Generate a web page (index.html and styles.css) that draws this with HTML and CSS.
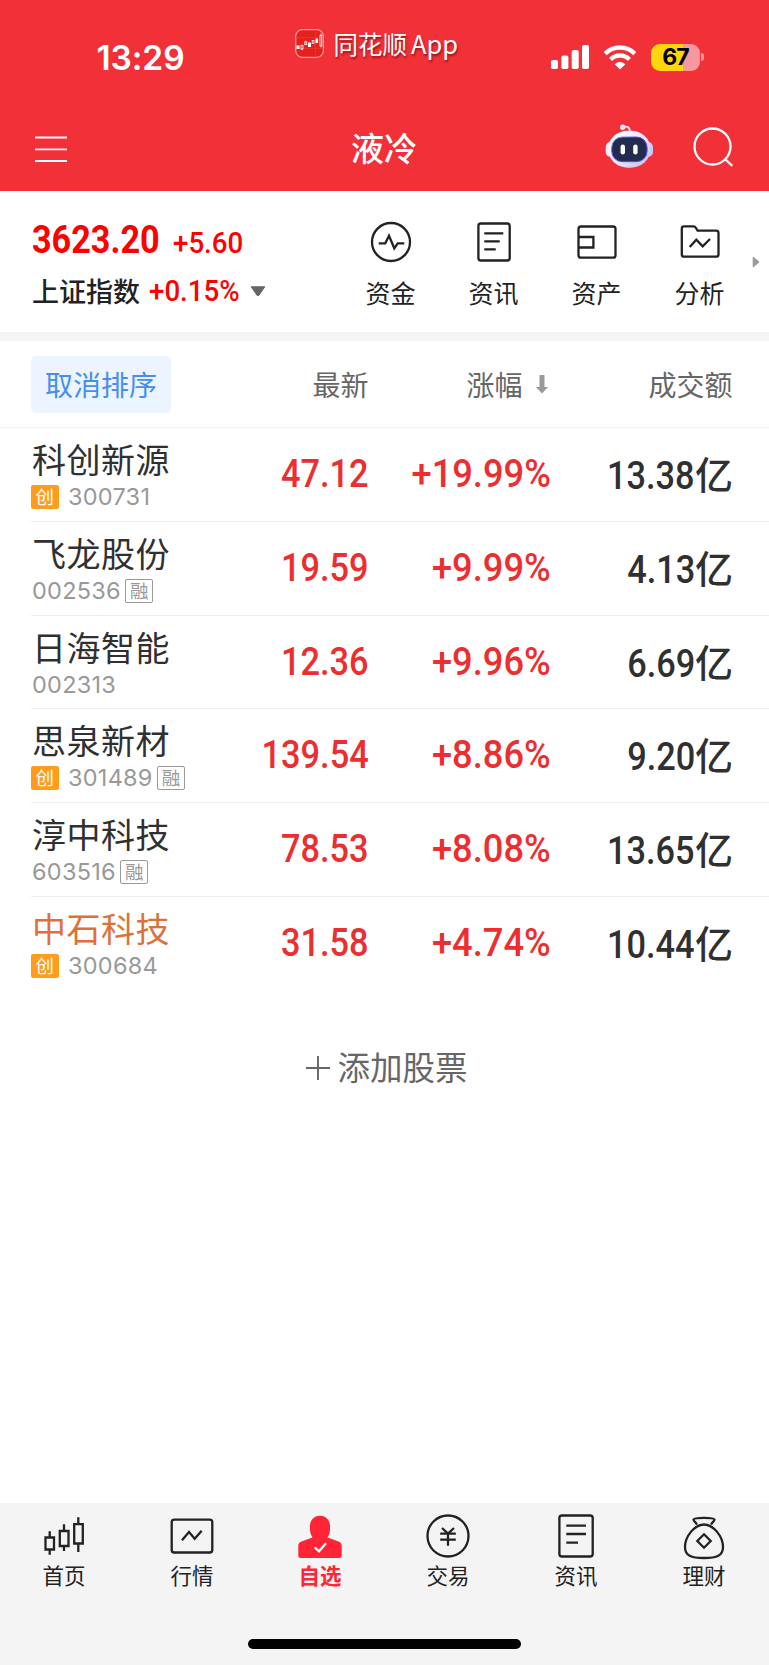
FILE: index.html
```html
<!DOCTYPE html>
<html lang="zh-CN">
<head>
<meta charset="utf-8">
<title>液冷</title>
<link rel="stylesheet" href="styles.css">
</head>
<body>
<div class="screen">
  <header class="top">
    <div class="status">
      <div class="clock">13:29</div>
      <div class="brand">
        <svg width="29" height="29" viewBox="0 0 29 29"><rect x=".7" y=".7" width="27.6" height="27.6" rx="6.5" fill="#e3211f" stroke="#f79a9a" stroke-width="1.3"/><path d="M1 8.500H28M1 19.500H28M20.500 1V28" stroke="#ec3a3a" stroke-width=".6"/><g fill="#fff"><rect x="1.500" y="16.500" width="3" height="3.500"/><rect x="13" y="13.500" width="3" height="4.500"/><rect x="20.500" y="9.500" width="2.500" height="4.500"/></g><g fill="none" stroke="#fff" stroke-width=".8"><rect x="6" y="16.700" width="2" height="3.300"/><path d="M7 15.500v1.200M7 20v1"/><rect x="9.800" y="13" width="2" height="2.700"/><path d="M10.800 11.700V13"/><rect x="17.200" y="11.500" width="1.800" height="2.800"/><rect x="25" y="6.500" width="1.800" height="10.500"/><path d="M25.900 4.500v2M25.900 17v1.300"/></g></svg>
        <span class="brand-name">同花顺<span class="latin">App</span></span>
      </div>
      <div class="signals">
        <svg class="bars" width="38" height="24" viewBox="0 0 38 24" fill="#fff"><rect x="0" y="15" width="7" height="9" rx="1.800"/><rect x="10.400" y="10.500" width="7" height="13.500" rx="1.800"/><rect x="20.700" y="5" width="7" height="19" rx="1.800"/><rect x="31" y="0" width="7" height="24" rx="1.800"/></svg>
        <svg class="wifi" width="34" height="25" viewBox="0 0 34 25" fill="none" stroke="#fff" stroke-width="4.300"><path d="M2.200 8.600A21 21 0 0 1 31.800 8.600"/><path d="M7.600 14.400A13.300 13.300 0 0 1 26.400 14.400"/><path d="M17 24.500L11.700 19.200A7.500 7.500 0 0 1 22.300 19.200Z" fill="#fff" stroke="none"/></svg>
        <div class="battery"><span>67</span></div><i class="battery-tip"></i>
      </div>
    </div>
    <div class="nav">
      <svg class="menu" width="32" height="28" viewBox="0 0 32 28" stroke="#fff" stroke-width="1.800"><path d="M0 2.500H32M0 14.300H32M0 26H32"/></svg>
      <h1 class="title">液冷</h1>
      <div class="nav-tools">
        <svg width="52" height="48" viewBox="0 0 52 48">
          <defs><linearGradient id="shell" x1="0" y1="0" x2="1" y2="1"><stop offset="0" stop-color="#fff"/><stop offset=".55" stop-color="#e9e6fa"/><stop offset="1" stop-color="#b9b9ee"/></linearGradient><linearGradient id="rim" x1="0" y1="0" x2="1" y2="1"><stop offset="0" stop-color="#6fd0e4"/><stop offset=".4" stop-color="#7c35d8"/><stop offset="1" stop-color="#4b59f0"/></linearGradient></defs>
          <path d="M20 5.500C24 3.500 27 5 27 10" fill="none" stroke="#eae4f6" stroke-width="1.800"/><circle cx="19.700" cy="5.300" r="2.700" fill="#e8e2f6"/>
          <rect x="2.700" y="20" width="10" height="15" rx="5" fill="#eeeafb"/><rect x="40" y="20" width="10" height="15" rx="5" fill="#c9c8f2"/>
          <rect x="5" y="8.700" width="42.600" height="37" rx="20" fill="url(#shell)"/>
          <rect x="8.700" y="15" width="35.400" height="24.700" rx="10.500" fill="#222c50" stroke="url(#rim)" stroke-width="1"/>
          <rect x="17.600" y="22.400" width="4.400" height="10" rx="2.200" fill="#fff"/><rect x="30.200" y="22.400" width="4.400" height="10" rx="2.200" fill="#fff"/>
        </svg>
        <svg width="42" height="42" viewBox="0 0 42 42" fill="none" stroke="#fff" stroke-width="2.300"><circle cx="19.500" cy="19.500" r="18"/><path d="M32 32L39.300 38.800"/></svg>
      </div>
    </div>
  </header>

  <section class="index-bar">
    <div class="index">
      <div class="index-row"><b class="num idx-value">3623.20</b><span class="num idx-small">+5.60</span></div>
      <div class="index-row second"><span class="idx-name">上证指数</span><span class="num idx-small">+0.15%</span><svg width="16" height="11" viewBox="0 0 16 11"><path d="M1.200 .8H14.800L8.800 9.500H7.200Z" fill="#666" stroke="#666" stroke-linejoin="round"/></svg></div>
    </div>
    <div class="quick">
      <div class="quick-item"><svg class="line-icon" width="44" height="44" viewBox="-22 -22 44 44"><circle r="19"/><path d="M-12.300 1.300H-5.700L-2 -6.300L3.300 6.300L6.700 1.300H13.300"/></svg><span>资金</span></div>
      <div class="quick-item"><svg class="line-icon" width="44" height="44" viewBox="-22 -22 44 44"><rect x="-15.600" y="-18.500" width="31.300" height="37" rx="2.500"/><path d="M-9.700 -8.700H9.300M-9.700 -.7H5.700M-9.700 7.300H1.700"/></svg><span>资讯</span></div>
      <div class="quick-item"><svg class="line-icon" width="44" height="44" viewBox="-22 -22 44 44"><rect x="-18.500" y="-15.500" width="37" height="31.200" rx="2.500"/><path d="M-18.500 -5H-3.600V5.500H-18.500"/></svg><span>资产</span></div>
      <div class="quick-item"><svg class="line-icon" width="44" height="44" viewBox="-22 -22 44 44"><path d="M-16 -15.700H-6.500Q-5 -15.700 -4 -14L-2.400 -11.300H16Q18.500 -11.300 18.500 -9V12.500Q18.500 14.700 16 14.700H-16Q-18.200 14.700 -18.200 12.500V-13.500Q-18.200 -15.700 -16 -15.700Z"/><path d="M-10.300 5L-3.700 -2.300L2.700 4.300L10 -3"/></svg><span>分析</span></div>
    </div>
    <svg class="more" width="8" height="12" viewBox="0 0 8 12"><path d="M1.200 1L7 6L1.200 11Z" fill="#999" stroke="#999" stroke-linejoin="round"/></svg>
  </section>

  <section class="stocks">
    <div class="thead">
      <div><span class="sort-off">取消排序</span><span class="th">最新</span></div>
      <div class="th sorted">涨幅<svg width="12" height="19" viewBox="0 0 12 19"><path d="M3.500 0H8.500V12H12L6 18.500L0 12H3.500Z" fill="#999"/></svg></div>
      <div class="th">成交额</div>
    </div>
    <div class="row"><div class="stock"><span class="name">科创新源</span><span class="code"><i class="tag gem">创</i>300731</span></div><span class="num price">47.12</span><span class="num change">+19.99%</span><span class="amount"><span class="num">13.38</span><span class="unit">亿</span></span></div>
    <div class="row"><div class="stock"><span class="name">飞龙股份</span><span class="code">002536<i class="tag margin">融</i></span></div><span class="num price">19.59</span><span class="num change">+9.99%</span><span class="amount"><span class="num">4.13</span><span class="unit">亿</span></span></div>
    <div class="row"><div class="stock"><span class="name">日海智能</span><span class="code">002313</span></div><span class="num price">12.36</span><span class="num change">+9.96%</span><span class="amount"><span class="num">6.69</span><span class="unit">亿</span></span></div>
    <div class="row"><div class="stock"><span class="name">思泉新材</span><span class="code"><i class="tag gem">创</i>301489<i class="tag margin">融</i></span></div><span class="num price">139.54</span><span class="num change">+8.86%</span><span class="amount"><span class="num">9.20</span><span class="unit">亿</span></span></div>
    <div class="row"><div class="stock"><span class="name">淳中科技</span><span class="code">603516<i class="tag margin">融</i></span></div><span class="num price">78.53</span><span class="num change">+8.08%</span><span class="amount"><span class="num">13.65</span><span class="unit">亿</span></span></div>
    <div class="row last"><div class="stock"><span class="name highlight">中石科技</span><span class="code"><i class="tag gem">创</i>300684</span></div><span class="num price">31.58</span><span class="num change">+4.74%</span><span class="amount"><span class="num">10.44</span><span class="unit">亿</span></span></div>
    <div class="add"><svg width="24" height="24" viewBox="0 0 24 24" stroke="#666" stroke-width="1.900"><path d="M0 12H24M12 0V24"/></svg><span>添加股票</span></div>
  </section>

  <nav class="tabbar">
    <div class="tabs">
      <div class="tab"><svg class="line-icon" width="48" height="48" viewBox="-24 -24 48 48"><path d="M-18.500 1.500H-10V13.500H-18.500ZM-14.300 -4.700V1.500M-14.300 13.500V18.700M-4.200 -5H4.500V10H-4.200ZM0 -11.700V-5M0 10V15M10.200 -11.800H18.800V7.500H10.200ZM14.300 -18.700V-11.800M14.300 7.500V16"/></svg><span>首页</span></div>
      <div class="tab"><svg class="line-icon" width="48" height="48" viewBox="-24 -24 48 48"><rect x="-20.300" y="-16.300" width="40.600" height="32.800" rx="2.500"/><path d="M-10 4.300L-3 -4L2.700 2.700L9.700 -5.300"/></svg><span>行情</span></div>
      <div class="tab active"><svg width="48" height="48" viewBox="-24 -24 48 48"><path d="M-10 -10C-10 -16 -6 -20.300 0 -20.300S10 -16 10 -10V-6C10 -2.500 8.500 -.5 7.500 1.500L18.500 5.500C21 6.500 21.700 8 21.700 10V19.500Q21.700 22 19.200 22H-19.200Q-21.700 22 -21.700 19.500V10C-21.700 8 -21 6.500 -18.500 5.500L-7.500 1.500C-8.500 -.5 -10 -2.500 -10 -6Z" fill="#ff2436"/><path d="M-5.300 11.300L-1 15.300L6 7.300" fill="none" stroke="#fff" stroke-width="2.200"/></svg><span>自选</span></div>
      <div class="tab"><svg class="line-icon" width="48" height="48" viewBox="-24 -24 48 48"><circle r="20.500"/><path d="M-6 -8L0 -2.300L6 -8M-7.800 -2.300H7.800M-7.800 3.700H7.800M0 -2.300V9.700"/></svg><span>交易</span></div>
      <div class="tab"><svg class="line-icon" width="48" height="48" viewBox="-24 -24 48 48"><rect x="-16.600" y="-20.500" width="33.300" height="41" rx="2.500"/><path d="M-9.700 -10.300H10M-9.700 -2H10M-9.700 6.700H2"/></svg><span>资讯</span></div>
      <div class="tab"><svg class="line-icon" width="48" height="48" viewBox="-24 -24 48 48"><path d="M-7 -11.300C-8 -14 -10.500 -14.500 -10.500 -16.500C-10 -18.800 10 -18.800 10.500 -16.500C10.500 -14.500 8 -14 7 -11.300"/><path d="M0 -11.500C9 -11.500 19 0 19 11C19 19.500 13 22 0 22S-19 19.500 -19 11C-19 0 -9 -11.500 0 -11.500Z"/><path d="M0 -1.700L6.700 5L0 11.700L-6.700 5Z"/></svg><span>理财</span></div>
    </div>
    <div class="home-bar"></div>
  </nav>
</div>
</body>
</html>
```
FILE: styles.css
```css
* { box-sizing: border-box; }
body { margin: 0; background: #fff; font-family: "Noto Sans CJK SC", sans-serif; color: #222; }
svg { display: block; flex: none; }
i { font-style: normal; }
.screen { width: 769px; height: 1665px; display: flex; flex-direction: column; overflow: hidden; }

.top { height: 191px; background: #f23038; color: #fff; flex: none; }
.status { height: 104px; display: grid; grid-template-columns: 294.500px 256.500px 1fr; }
.clock { font: 600 33.500px/40px Inter, sans-serif; padding: 38px 0 0 96.500px; letter-spacing: -.1px; }
.brand { display: flex; gap: 10px; padding-top: 29px; }
.brand-name { font: 400 24.500px/28px "Noto Sans CJK SC", sans-serif; white-space: nowrap; text-shadow: 1px 2px 2px rgba(80,0,0,.55); }
.latin { font-size: 25.500px; margin-left: 4px; }
.signals { display: flex; align-items: flex-start; padding-top: 44px; }
.bars { margin-top: 1px; }
.wifi { margin: 1px 14px 0 14px; }
.battery { width: 49px; height: 27px; border-radius: 9px; background: linear-gradient(90deg, #ffd60a 66%, #f9989c 66%); color: #000; font: 700 23px/27px Inter, sans-serif; text-align: center; letter-spacing: -.8px; }
.battery-tip { width: 3px; height: 8px; margin: 9px 0 0 1px; border-radius: 0 3px 3px 0; background: #f9989c; }
.nav { height: 87px; display: grid; grid-template-columns: 199px 370px 200px; align-items: start; }
.menu { margin: 31px 0 0 35px; }
.title { margin: 20px 0 0; font-size: 33px; line-height: 46px; font-weight: 500; text-align: center; }
.nav-tools { display: flex; padding: 18px 0 0 34px; gap: 38px; }
.nav-tools svg:last-child { margin-top: 5px; }

.index-bar { height: 150px; border-bottom: 9px solid #f4f4f4; display: flex; flex: none; }
.index { width: 339px; padding: 25px 0 0 32px; }
.index-row { display: flex; align-items: baseline; height: 48px; line-height: 48px; color: #f00; }
.second { margin-top: 3px; align-items: center; }
.num { display: inline-block; font-family: Roboto, sans-serif; white-space: nowrap; transform-origin: left center; }
.idx-value { font-size: 38px; font-weight: 700; width: 141px; transform: scaleX(.9); }
.idx-small { font-size: 29px; font-weight: 500; transform: scaleX(.955); }
.second .idx-small { width: 101px; }
.idx-name { color: #222; font-size: 27px; width: 117px; font-weight: 500; }
.quick { display: grid; grid-template-columns: repeat(4, 103px); }
.quick-item { display: flex; flex-direction: column; align-items: center; padding-top: 29px; font-size: 25px; line-height: 36px; }
.quick-item span { margin-top: 10px; }
.line-icon { fill: none; stroke: #222; stroke-width: 2.3; }
.more { margin: 65px 0 0 1px; }

.stocks { flex: 1; }
.thead { height: 87px; display: grid; grid-template-columns: 336.500px 182px 182px; padding-left: 32px; border-bottom: 1px solid #f0f0f0; align-items: center; font-size: 28px; color: #666; }
.thead > div { display: flex; justify-content: space-between; align-items: center; }
.thead > div + div { justify-content: flex-end; }
.sort-off { margin-left: -1px; width: 140px; height: 57px; line-height: 56px; border-radius: 5px; background: #ebf4ff; color: #468fee; text-align: center; }
.thead .sorted { gap: 13px; padding-right: 3px; }
.row { height: 93.800px; margin-left: 31px; padding-left: 1px; display: grid; grid-template-columns: 200px 136.500px 182.500px 182px; border-bottom: 1px solid #eee; }
.row.last { border: 0; }
.stock { display: flex; flex-direction: column; }
.name { font-size: 34px; line-height: 48px; letter-spacing: .5px; margin: 7px 0 2px; color: #303030; white-space: nowrap; }
.name.highlight { color: #dc713b; }
.code { display: flex; align-items: center; height: 24px; font: 400 23.500px/24px Inter, sans-serif; letter-spacing: .25px; color: #999; }
.tag { height: 24px; width: 28px; font: 400 18.500px/22px "Noto Sans CJK SC", sans-serif; text-align: center; border-radius: 2px; }
.gem { background: #ff9c1b; color: #fff; margin: 0 9px 0 -1px; line-height: 23px; }
.margin { border: 1px solid #999; margin-left: 4.500px; line-height: 21px; }
.price, .change, .row .amount .num { font-size: 39px; font-weight: 500; }
.price, .change { color: #ec2e30; line-height: 93px; text-align: right; justify-self: end; transform-origin: right center; }
.price { transform: scaleX(.88); }
.change { transform: scaleX(.93); }
.amount { display: flex; justify-content: flex-end; color: #303030; font-size: 38px; font-weight: 500; line-height: 97px; }
.amount .num { transform-origin: right center; transform: scaleX(.88); }
.unit { line-height: 90px; }
.add { display: flex; justify-content: center; align-items: center; gap: 7px; margin-top: 53px; height: 48px; font-size: 32.500px; color: #666; padding-left: 5px; }
.add span { line-height: 44px; margin-top: -3px; }

.tabbar { height: 162px; background: #f4f4f4; flex: none; }
.tabs { display: grid; grid-template-columns: repeat(6, 128px); height: 136px; }
.tab { display: flex; flex-direction: column; align-items: center; padding-top: 9px; font-size: 21.500px; line-height: 30px; }
.tab span { margin-top: 0; }
.tab.active { color: #ff2436; font-weight: 700; }
.home-bar { width: 273px; height: 10px; border-radius: 5px; background: #000; margin: 0 auto; }
```
